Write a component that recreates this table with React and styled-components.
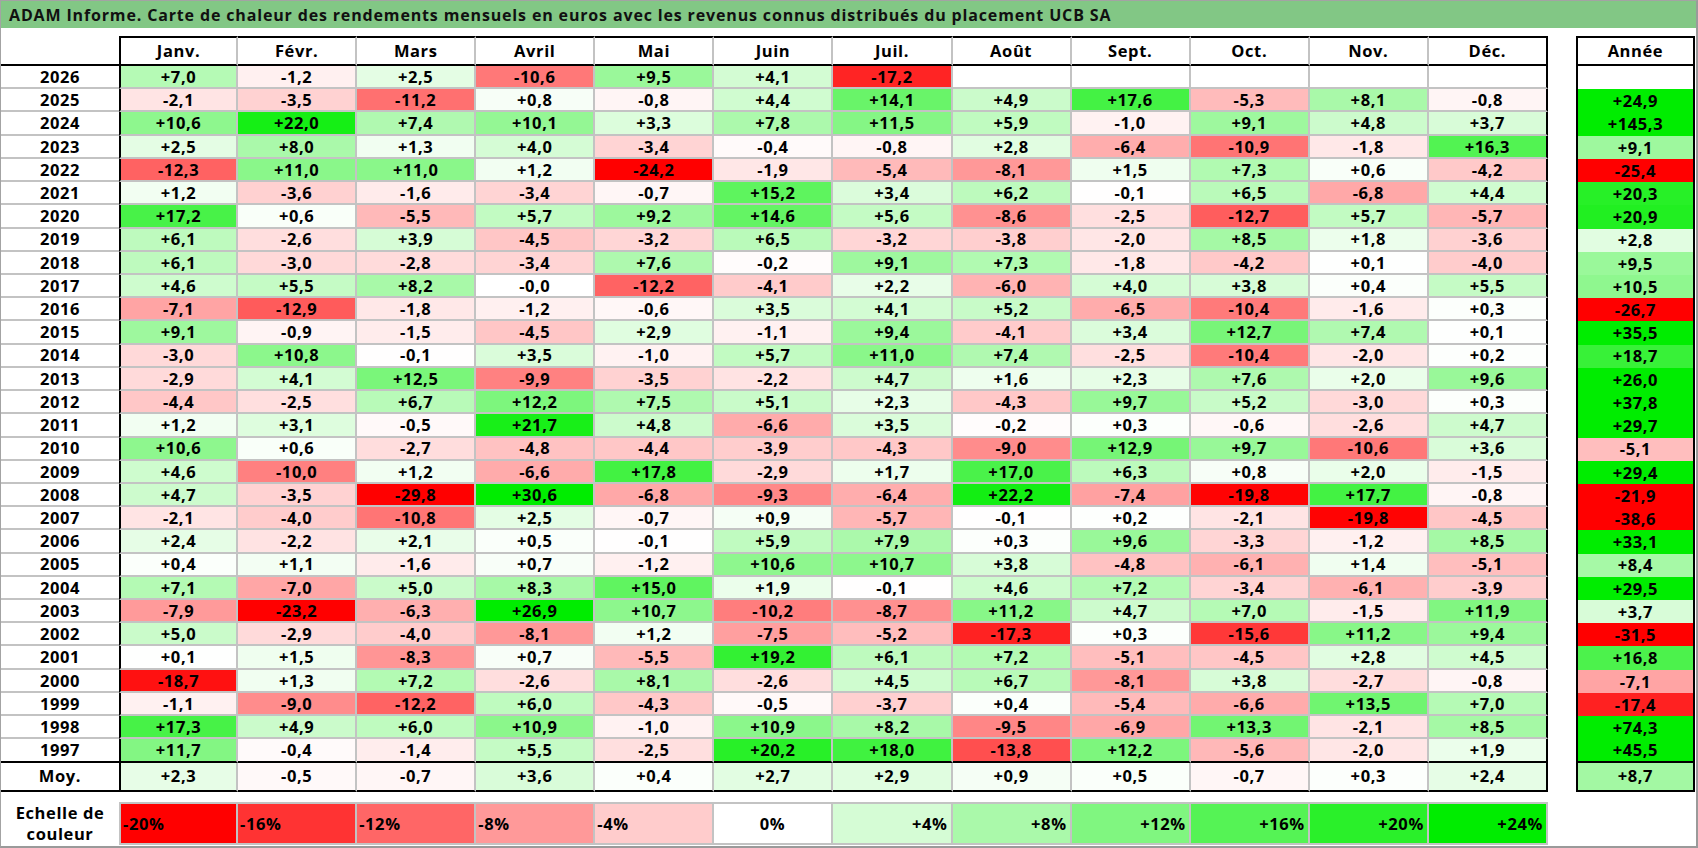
import React from "react";
import styled, { createGlobalStyle } from "styled-components";

const GlobalStyle = createGlobalStyle`
  html, body { margin: 0; padding: 0; background: #ffffff; }
  body { font-family: "Open Sans", "Noto Sans", sans-serif; color: #000; }
`;

const MONTHS = ["Janv.", "Févr.", "Mars", "Avril", "Mai", "Juin", "Juil.", "Août", "Sept.", "Oct.", "Nov.", "Déc."];

const DATA = [
  ["2026", "+7,0 -1,2 +2,5 -10,6 +9,5 +4,1 -17,2 . . . . .", "."],
  ["2025", "-2,1 -3,5 -11,2 +0,8 -0,8 +4,4 +14,1 +4,9 +17,6 -5,3 +8,1 -0,8", "+24,9"],
  ["2024", "+10,6 +22,0 +7,4 +10,1 +3,3 +7,8 +11,5 +5,9 -1,0 +9,1 +4,8 +3,7", "+145,3"],
  ["2023", "+2,5 +8,0 +1,3 +4,0 -3,4 -0,4 -0,8 +2,8 -6,4 -10,9 -1,8 +16,3", "+9,1"],
  ["2022", "-12,3 +11,0 +11,0 +1,2 -24,2 -1,9 -5,4 -8,1 +1,5 +7,3 +0,6 -4,2", "-25,4"],
  ["2021", "+1,2 -3,6 -1,6 -3,4 -0,7 +15,2 +3,4 +6,2 -0,1 +6,5 -6,8 +4,4", "+20,3"],
  ["2020", "+17,2 +0,6 -5,5 +5,7 +9,2 +14,6 +5,6 -8,6 -2,5 -12,7 +5,7 -5,7", "+20,9"],
  ["2019", "+6,1 -2,6 +3,9 -4,5 -3,2 +6,5 -3,2 -3,8 -2,0 +8,5 +1,8 -3,6", "+2,8"],
  ["2018", "+6,1 -3,0 -2,8 -3,4 +7,6 -0,2 +9,1 +7,3 -1,8 -4,2 +0,1 -4,0", "+9,5"],
  ["2017", "+4,6 +5,5 +8,2 -0,0 -12,2 -4,1 +2,2 -6,0 +4,0 +3,8 +0,4 +5,5", "+10,5"],
  ["2016", "-7,1 -12,9 -1,8 -1,2 -0,6 +3,5 +4,1 +5,2 -6,5 -10,4 -1,6 +0,3", "-26,7"],
  ["2015", "+9,1 -0,9 -1,5 -4,5 +2,9 -1,1 +9,4 -4,1 +3,4 +12,7 +7,4 +0,1", "+35,5"],
  ["2014", "-3,0 +10,8 -0,1 +3,5 -1,0 +5,7 +11,0 +7,4 -2,5 -10,4 -2,0 +0,2", "+18,7"],
  ["2013", "-2,9 +4,1 +12,5 -9,9 -3,5 -2,2 +4,7 +1,6 +2,3 +7,6 +2,0 +9,6", "+26,0"],
  ["2012", "-4,4 -2,5 +6,7 +12,2 +7,5 +5,1 +2,3 -4,3 +9,7 +5,2 -3,0 +0,3", "+37,8"],
  ["2011", "+1,2 +3,1 -0,5 +21,7 +4,8 -6,6 +3,5 -0,2 +0,3 -0,6 -2,6 +4,7", "+29,7"],
  ["2010", "+10,6 +0,6 -2,7 -4,8 -4,4 -3,9 -4,3 -9,0 +12,9 +9,7 -10,6 +3,6", "-5,1"],
  ["2009", "+4,6 -10,0 +1,2 -6,6 +17,8 -2,9 +1,7 +17,0 +6,3 +0,8 +2,0 -1,5", "+29,4"],
  ["2008", "+4,7 -3,5 -29,8 +30,6 -6,8 -9,3 -6,4 +22,2 -7,4 -19,8 +17,7 -0,8", "-21,9"],
  ["2007", "-2,1 -4,0 -10,8 +2,5 -0,7 +0,9 -5,7 -0,1 +0,2 -2,1 -19,8 -4,5", "-38,6"],
  ["2006", "+2,4 -2,2 +2,1 +0,5 -0,1 +5,9 +7,9 +0,3 +9,6 -3,3 -1,2 +8,5", "+33,1"],
  ["2005", "+0,4 +1,1 -1,6 +0,7 -1,2 +10,6 +10,7 +3,8 -4,8 -6,1 +1,4 -5,1", "+8,4"],
  ["2004", "+7,1 -7,0 +5,0 +8,3 +15,0 +1,9 -0,1 +4,6 +7,2 -3,4 -6,1 -3,9", "+29,5"],
  ["2003", "-7,9 -23,2 -6,3 +26,9 +10,7 -10,2 -8,7 +11,2 +4,7 +7,0 -1,5 +11,9", "+3,7"],
  ["2002", "+5,0 -2,9 -4,0 -8,1 +1,2 -7,5 -5,2 -17,3 +0,3 -15,6 +11,2 +9,4", "-31,5"],
  ["2001", "+0,1 +1,5 -8,3 +0,7 -5,5 +19,2 +6,1 +7,2 -5,1 -4,5 +2,8 +4,5", "+16,8"],
  ["2000", "-18,7 +1,3 +7,2 -2,6 +8,1 -2,6 +4,5 +6,7 -8,1 +3,8 -2,7 -0,8", "-7,1"],
  ["1999", "-1,1 -9,0 -12,2 +6,0 -4,3 -0,5 -3,7 +0,4 -5,4 -6,6 +13,5 +7,0", "-17,4"],
  ["1998", "+17,3 +4,9 +6,0 +10,9 -1,0 +10,9 +8,2 -9,5 -6,9 +13,3 -2,1 +8,5", "+74,3"],
  ["1997", "+11,7 -0,4 -1,4 +5,5 -2,5 +20,2 +18,0 -13,8 +12,2 -5,6 -2,0 +1,9", "+45,5"],
];

const AVG = { months: "+2,3 -0,5 -0,7 +3,6 +0,4 +2,7 +2,9 +0,9 +0,5 -0,7 +0,3 +2,4".split(" "), year: "+8,7" };

const SCALE = [-20, -16, -12, -8, -4, 0, 4, 8, 12, 16, 20, 24];

function heat(str) {
  if (str === "." || str === "") return "#ffffff";
  const v = parseFloat(String(str).replace(",", "."));
  if (!isFinite(v) || v === 0) return "#ffffff";
  if (v < 0) {
    const t = Math.min(1, -v / 20);
    const c = Math.round(255 * (1 - t));
    return `rgb(255, ${c}, ${c})`;
  }
  const t = Math.min(1, v / 24);
  const c = Math.round(255 * (1 - t));
  const g = Math.round(255 - 18 * t);
  return `rgb(${c}, ${g}, ${c})`;
}

const GREY = "#c3c3c3";
const BLACK = "#000000";
const ROW_H = "23.23px";

const Frame = styled.div`
  width: 1698px;
  height: 848px;
  box-sizing: border-box;
  border-left: 1px solid #a3a3a3;
  border-top: 1px solid #a3a3a3;
  border-right: 2px solid #9a9a9a;
  border-bottom: 2px solid #9a9a9a;
  display: flex;
  flex-direction: column;
  overflow: hidden;
  background: #ffffff;
`;

const TitleBar = styled.div`
  height: 27px;
  background: #82c785;
  display: flex;
  align-items: center;
  padding-left: 8px;
  font-weight: 700;
  font-size: 16px;
  letter-spacing: 0.85px;
  color: #111;
  white-space: nowrap;
`;

const Content = styled.div`
  padding-top: 8px;
  display: flex;
  flex-direction: column;
  gap: 10px;
`;

const TablesRow = styled.div`
  display: flex;
  gap: 28px;
`;

const MainGrid = styled.div`
  display: grid;
  grid-template-columns: 118px repeat(12, 119.08px);
  grid-template-rows: 30px repeat(30, ${ROW_H}) 29px;
`;

const YearGrid = styled.div`
  display: grid;
  grid-template-columns: 119px;
  grid-template-rows: 30px repeat(30, ${ROW_H}) 29px;
`;

const CellBase = styled.div`
  box-sizing: border-box;
  display: flex;
  align-items: center;
  justify-content: center;
  font-weight: 700;
  font-size: 16.5px;
  letter-spacing: 0.6px;
  white-space: nowrap;
  line-height: 1;
  padding-top: 1px;
`;

const Corner = styled(CellBase)`
  border-bottom: 2px solid ${BLACK};
`;

const MonthHead = styled(CellBase)`
  border-top: 2px solid ${BLACK};
  border-bottom: 2px solid ${BLACK};
  border-left: ${(p) => (p.$first ? `2px solid ${BLACK}` : "none")};
  border-right: 2px solid ${(p) => (p.$last ? BLACK : GREY)};
`;

const YearLabel = styled(CellBase)`
  border-bottom: 2px solid ${(p) => (p.$edge ? BLACK : GREY)};
`;

const ValueCell = styled(CellBase)`
  background: ${(p) => p.$bg};
  border-left: ${(p) => (p.$first ? `2px solid ${BLACK}` : "none")};
  border-right: 2px solid ${(p) => (p.$last ? BLACK : GREY)};
  border-bottom: 2px solid ${(p) => (p.$edge ? BLACK : GREY)};
`;

const YearHead = styled(CellBase)`
  border: 2px solid ${BLACK};
`;

const YearCell = styled(CellBase)`
  background: ${(p) => p.$bg};
  border-left: 2px solid ${BLACK};
  border-right: 2px solid ${BLACK};
  border-bottom: ${(p) => (p.$edge ? `2px solid ${BLACK}` : "none")};
`;

const ScaleRow = styled.div`
  display: grid;
  grid-template-columns: 118px repeat(12, 119.08px);
  height: 43px;
`;

const ScaleLabel = styled.div`
  display: flex;
  align-items: center;
  justify-content: center;
  text-align: center;
  font-weight: 700;
  font-size: 16.5px;
  letter-spacing: 0.6px;
  line-height: 21px;
`;

const ScaleCell = styled.div`
  box-sizing: border-box;
  background: ${(p) => p.$bg};
  border-top: 2px solid ${GREY};
  border-bottom: 2px solid ${GREY};
  border-right: 2px solid ${GREY};
  border-left: ${(p) => (p.$first ? `2px solid ${GREY}` : "none")};
  display: flex;
  align-items: center;
  justify-content: ${(p) => p.$align};
  padding: 0 3px 0 2px;
  font-weight: 700;
  font-size: 16.5px;
  letter-spacing: 0.6px;
  white-space: nowrap;
`;

function scaleAlign(v) {
  if (v < 0) return "flex-start";
  if (v === 0) return "center";
  return "flex-end";
}

function scaleText(v) {
  if (v > 0) return `+${v}%`;
  return `${v}%`;
}

export default function App() {
  return (
    <>
      <GlobalStyle />
      <Frame>
        <TitleBar>
          ADAM Informe. Carte de chaleur des rendements mensuels en euros avec les revenus connus distribués du placement UCB SA
        </TitleBar>
        <Content>
          <TablesRow>
            <MainGrid>
              <Corner />
              {MONTHS.map((m, i) => (
                <MonthHead key={m} $first={i === 0} $last={i === 11}>
                  {m}
                </MonthHead>
              ))}
              {DATA.map(([year, vals], r) => {
                const edge = r === DATA.length - 1;
                const cells = vals.split(" ");
                return (
                  <React.Fragment key={year}>
                    <YearLabel $edge={edge}>{year}</YearLabel>
                    {cells.map((v, i) => (
                      <ValueCell key={i} $bg={heat(v)} $first={i === 0} $last={i === 11} $edge={edge}>
                        {v === "." ? "" : v}
                      </ValueCell>
                    ))}
                  </React.Fragment>
                );
              })}
              <YearLabel $edge>Moy.</YearLabel>
              {AVG.months.map((v, i) => (
                <ValueCell key={i} $bg={heat(v)} $first={i === 0} $last={i === 11} $edge>
                  {v}
                </ValueCell>
              ))}
            </MainGrid>
            <YearGrid>
              <YearHead>Année</YearHead>
              {DATA.map(([year, , total], r) => (
                <YearCell key={year} $bg={heat(total)} $edge={r === DATA.length - 1}>
                  {total === "." ? "" : total}
                </YearCell>
              ))}
              <YearCell $bg={heat(AVG.year)} $edge>
                {AVG.year}
              </YearCell>
            </YearGrid>
          </TablesRow>
          <ScaleRow>
            <ScaleLabel>
              Echelle de
              <br />
              couleur
            </ScaleLabel>
            {SCALE.map((v, i) => (
              <ScaleCell key={v} $bg={heat(String(v))} $first={i === 0} $align={scaleAlign(v)}>
                {scaleText(v)}
              </ScaleCell>
            ))}
          </ScaleRow>
        </Content>
      </Frame>
    </>
  );
}
